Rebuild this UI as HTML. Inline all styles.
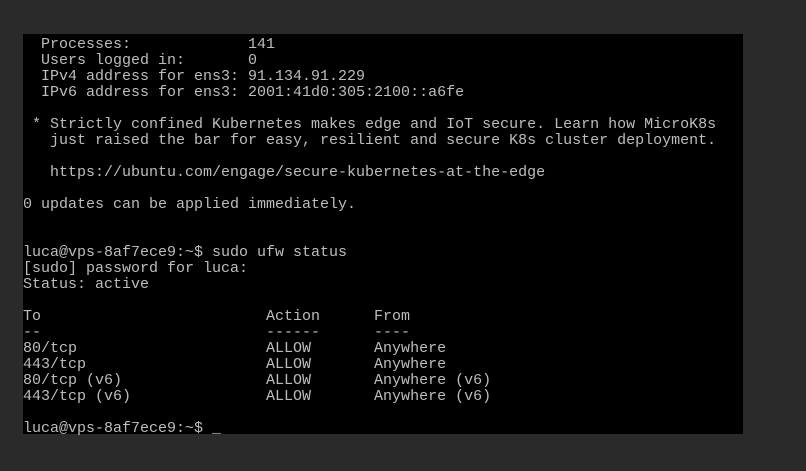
<!DOCTYPE html>
<html><head><meta charset="utf-8"><style>
html,body{margin:0;padding:0;width:806px;height:471px;background:#2a2a2a;overflow:hidden}
#t{position:absolute;left:23px;top:34px;width:720px;height:400px;background:#000}
pre{position:absolute;left:23px;top:37px;margin:0;font-family:"Liberation Mono","DejaVu Sans Mono",monospace;font-size:15px;line-height:16px;color:#bdbdbd;letter-spacing:0}
</style></head><body>
<div id="t"></div>
<pre>  Processes:             141
  Users logged in:       0
  IPv4 address for ens3: 91.134.91.229
  IPv6 address for ens3: 2001:41d0:305:2100::a6fe

 * Strictly confined Kubernetes makes edge and IoT secure. Learn how MicroK8s
   just raised the bar for easy, resilient and secure K8s cluster deployment.

   https://ubuntu.com/engage/secure-kubernetes-at-the-edge

0 updates can be applied immediately.


luca@vps-8af7ece9:~$ sudo ufw status
[sudo] password for luca:
Status: active

To                         Action      From
--                         ------      ----
80/tcp                     ALLOW       Anywhere
443/tcp                    ALLOW       Anywhere
80/tcp (v6)                ALLOW       Anywhere (v6)
443/tcp (v6)               ALLOW       Anywhere (v6)

luca@vps-8af7ece9:~$ _</pre>
</body></html>
